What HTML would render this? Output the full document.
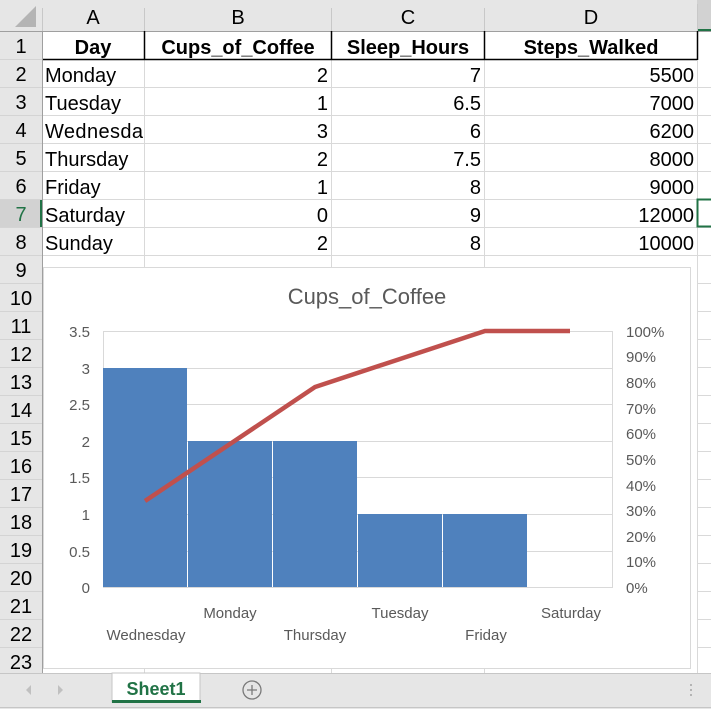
<!DOCTYPE html>
<html><head><meta charset="utf-8"><style>
html,body{margin:0;padding:0;background:#fff;}
svg{display:block;}
</style></head><body>
<svg width="711" height="709" xmlns="http://www.w3.org/2000/svg" font-family="Liberation Sans, Arial, sans-serif">
<rect width="711" height="709" fill="#fff"/>
<!-- column header -->
<rect x="0" y="0" width="711" height="31" fill="#e6e6e6"/>
<rect x="697" y="0" width="14" height="31" fill="#d2d2d2"/>
<rect x="697" y="29" width="14" height="3" fill="#217346"/>
<polygon points="36,6 36,27 15,27" fill="#b4b4b4"/>
<g stroke="#c8c8c8" stroke-width="1">
<line x1="42.5" y1="8" x2="42.5" y2="31"/><line x1="144.5" y1="8" x2="144.5" y2="31"/><line x1="331.5" y1="8" x2="331.5" y2="31"/><line x1="484.5" y1="8" x2="484.5" y2="31"/><line x1="697.5" y1="4" x2="697.5" y2="31"/>
</g>
<line x1="0" y1="31.5" x2="711" y2="31.5" stroke="#9f9f9f"/>
<g font-size="20" fill="#000" text-anchor="middle">
<text x="93" y="24">A</text><text x="238" y="24">B</text><text x="408" y="24">C</text><text x="591" y="24">D</text>
</g>
<!-- row header -->
<rect x="0" y="32" width="42" height="641" fill="#e6e6e6"/>
<rect x="0" y="199" width="42" height="28" fill="#d2d2d2"/>
<rect x="40" y="199" width="3" height="28" fill="#217346"/>
<line x1="42.5" y1="31" x2="42.5" y2="673" stroke="#9f9f9f"/>
<g stroke="#d4d4d4">
<line x1="0" y1="59.5" x2="42" y2="59.5"/><line x1="0" y1="87.5" x2="42" y2="87.5"/><line x1="0" y1="115.5" x2="42" y2="115.5"/><line x1="0" y1="143.5" x2="42" y2="143.5"/><line x1="0" y1="171.5" x2="42" y2="171.5"/><line x1="0" y1="199.5" x2="42" y2="199.5"/><line x1="0" y1="227.5" x2="42" y2="227.5"/><line x1="0" y1="255.5" x2="42" y2="255.5"/><line x1="0" y1="283.5" x2="42" y2="283.5"/><line x1="0" y1="311.5" x2="42" y2="311.5"/><line x1="0" y1="339.5" x2="42" y2="339.5"/><line x1="0" y1="367.5" x2="42" y2="367.5"/><line x1="0" y1="395.5" x2="42" y2="395.5"/><line x1="0" y1="423.5" x2="42" y2="423.5"/><line x1="0" y1="451.5" x2="42" y2="451.5"/><line x1="0" y1="479.5" x2="42" y2="479.5"/><line x1="0" y1="507.5" x2="42" y2="507.5"/><line x1="0" y1="535.5" x2="42" y2="535.5"/><line x1="0" y1="563.5" x2="42" y2="563.5"/><line x1="0" y1="591.5" x2="42" y2="591.5"/><line x1="0" y1="619.5" x2="42" y2="619.5"/><line x1="0" y1="647.5" x2="42" y2="647.5"/>
</g>
<g font-size="20" fill="#000" text-anchor="middle">
<text x="21" y="53">1</text><text x="21" y="81">2</text><text x="21" y="109">3</text><text x="21" y="137">4</text><text x="21" y="165">5</text><text x="21" y="193">6</text><text x="21" y="221" fill="#217346">7</text><text x="21" y="249">8</text><text x="21" y="277">9</text><text x="21" y="305">10</text><text x="21" y="333">11</text><text x="21" y="361">12</text><text x="21" y="389">13</text><text x="21" y="417">14</text><text x="21" y="445">15</text><text x="21" y="473">16</text><text x="21" y="501">17</text><text x="21" y="529">18</text><text x="21" y="557">19</text><text x="21" y="585">20</text><text x="21" y="613">21</text><text x="21" y="641">22</text><text x="21" y="669">23</text>
</g>
<!-- grid -->
<g stroke="#d9d9d9">
<line x1="43" y1="87.5" x2="711" y2="87.5"/><line x1="43" y1="115.5" x2="711" y2="115.5"/><line x1="43" y1="143.5" x2="711" y2="143.5"/><line x1="43" y1="171.5" x2="711" y2="171.5"/><line x1="43" y1="199.5" x2="711" y2="199.5"/><line x1="43" y1="227.5" x2="711" y2="227.5"/><line x1="43" y1="255.5" x2="711" y2="255.5"/><line x1="697" y1="283.5" x2="711" y2="283.5"/><line x1="697" y1="311.5" x2="711" y2="311.5"/><line x1="697" y1="339.5" x2="711" y2="339.5"/><line x1="697" y1="367.5" x2="711" y2="367.5"/><line x1="697" y1="395.5" x2="711" y2="395.5"/><line x1="697" y1="423.5" x2="711" y2="423.5"/><line x1="697" y1="451.5" x2="711" y2="451.5"/><line x1="697" y1="479.5" x2="711" y2="479.5"/><line x1="697" y1="507.5" x2="711" y2="507.5"/><line x1="697" y1="535.5" x2="711" y2="535.5"/><line x1="697" y1="563.5" x2="711" y2="563.5"/><line x1="697" y1="591.5" x2="711" y2="591.5"/><line x1="697" y1="619.5" x2="711" y2="619.5"/><line x1="697" y1="647.5" x2="711" y2="647.5"/>
<line x1="144.5" y1="59" x2="144.5" y2="673"/><line x1="331.5" y1="59" x2="331.5" y2="673"/><line x1="484.5" y1="59" x2="484.5" y2="673"/><line x1="697.5" y1="59" x2="697.5" y2="673"/>
</g>
<!-- header row borders -->
<g stroke="#000" stroke-width="1.5">
<line x1="43" y1="59.5" x2="697" y2="59.5"/>
<line x1="144.5" y1="31" x2="144.5" y2="60"/><line x1="331.5" y1="31" x2="331.5" y2="60"/><line x1="484.5" y1="31" x2="484.5" y2="60"/><line x1="697.5" y1="31" x2="697.5" y2="60"/>
</g>
<rect x="697.5" y="199.5" width="20" height="27" fill="none" stroke="#217346" stroke-width="2"/>
<g font-size="20" font-weight="bold" fill="#000" text-anchor="middle">
<text x="93" y="54">Day</text><text x="238" y="54">Cups_of_Coffee</text><text x="408" y="54">Sleep_Hours</text><text x="591" y="54">Steps_Walked</text>
</g>
<g font-size="20" fill="#000">
<text x="45" y="82">Monday</text><text x="45" y="110">Tuesday</text><text x="45" y="138" textLength="98">Wednesda</text><text x="45" y="166">Thursday</text><text x="45" y="194">Friday</text><text x="45" y="222">Saturday</text><text x="45" y="250">Sunday</text>
</g>
<g font-size="20" fill="#000" text-anchor="end">
<text x="328" y="82">2</text><text x="328" y="110">1</text><text x="328" y="138">3</text><text x="328" y="166">2</text><text x="328" y="194">1</text><text x="328" y="222">0</text><text x="328" y="250">2</text>
<text x="481" y="82">7</text><text x="481" y="110">6.5</text><text x="481" y="138">6</text><text x="481" y="166">7.5</text><text x="481" y="194">8</text><text x="481" y="222">9</text><text x="481" y="250">8</text>
<text x="694" y="82">5500</text><text x="694" y="110">7000</text><text x="694" y="138">6200</text><text x="694" y="166">8000</text><text x="694" y="194">9000</text><text x="694" y="222">12000</text><text x="694" y="250">10000</text>
</g>
<!-- chart -->
<rect x="43.5" y="267.5" width="647" height="401" fill="#fff" stroke="#d9d9d9"/>
<text x="367" y="304" font-size="22" fill="#595959" text-anchor="middle" font-family="Liberation Sans, sans-serif">Cups_of_Coffee</text>
<g stroke="#d9d9d9">
<line x1="103" y1="331.5" x2="613" y2="331.5"/><line x1="103" y1="368.5" x2="613" y2="368.5"/><line x1="103" y1="404.5" x2="613" y2="404.5"/><line x1="103" y1="441.5" x2="613" y2="441.5"/><line x1="103" y1="477.5" x2="613" y2="477.5"/><line x1="103" y1="514.5" x2="613" y2="514.5"/><line x1="103" y1="551.5" x2="613" y2="551.5"/>
<line x1="103.5" y1="331" x2="103.5" y2="588"/><line x1="612.5" y1="331" x2="612.5" y2="588"/>
</g>
<g fill="#4f81bd">
<rect x="103" y="368" width="84" height="219"/><rect x="188" y="441" width="84" height="146"/><rect x="273" y="441" width="84" height="146"/><rect x="358" y="514" width="84" height="73"/><rect x="443" y="514" width="84" height="73"/>
</g>
<line x1="103" y1="587.5" x2="613" y2="587.5" stroke="#d9d9d9"/>
<polyline points="145,501 230,444 315,387 400,359 485,331 570,331" fill="none" stroke="#c0504d" stroke-width="4.5"/>
<g font-size="15" fill="#595959" text-anchor="end">
<text x="90" y="337">3.5</text><text x="90" y="374">3</text><text x="90" y="410">2.5</text><text x="90" y="447">2</text><text x="90" y="483">1.5</text><text x="90" y="520">1</text><text x="90" y="557">0.5</text><text x="90" y="593">0</text>
</g>
<g font-size="15" fill="#595959">
<text x="626" y="337">100%</text><text x="626" y="362">90%</text><text x="626" y="388">80%</text><text x="626" y="414">70%</text><text x="626" y="439">60%</text><text x="626" y="465">50%</text><text x="626" y="491">40%</text><text x="626" y="516">30%</text><text x="626" y="542">20%</text><text x="626" y="567">10%</text><text x="626" y="593">0%</text>
</g>
<g font-size="15" fill="#595959" text-anchor="middle">
<text x="230" y="618">Monday</text><text x="400" y="618">Tuesday</text><text x="571" y="618">Saturday</text>
<text x="146" y="640">Wednesday</text><text x="315" y="640">Thursday</text><text x="486" y="640">Friday</text>
</g>
<!-- tab bar -->
<rect x="0" y="673" width="711" height="36" fill="#e6e6e6"/>
<line x1="0" y1="673.5" x2="711" y2="673.5" stroke="#c6c6c6"/>
<line x1="0" y1="707.5" x2="711" y2="707.5" stroke="#c6c6c6"/>
<polygon points="31,685 26,690 31,695" fill="#c0c0c0"/>
<polygon points="58,685 63,690 58,695" fill="#c0c0c0"/>
<rect x="112" y="673" width="88" height="29" fill="#fff" stroke="#c6c6c6"/>
<rect x="112" y="700" width="89" height="3" fill="#217346"/>
<text x="156" y="695" font-size="18" font-weight="bold" fill="#217346" text-anchor="middle">Sheet1</text>
<circle cx="252" cy="690" r="9" fill="none" stroke="#7a7a7a" stroke-width="1.3"/>
<path d="M247 690H257M252 685V695" stroke="#7a7a7a" stroke-width="1.3"/>
<g fill="#b4b4b4"><rect x="690" y="684" width="2" height="2"/><rect x="690" y="689" width="2" height="2"/><rect x="690" y="694" width="2" height="2"/></g>
</svg>
</body></html>
